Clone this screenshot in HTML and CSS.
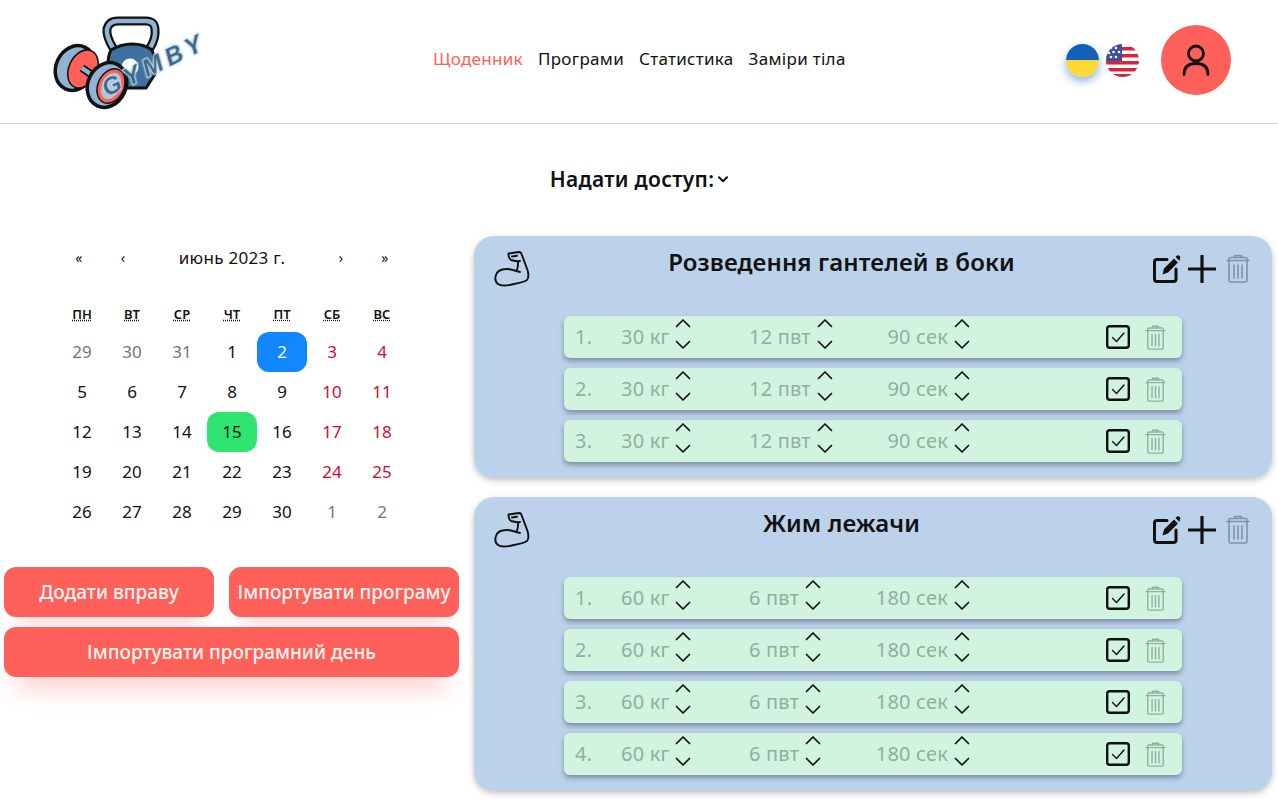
FILE: index.html
```html
<!DOCTYPE html>
<html lang="uk">
<head>
<meta charset="utf-8">
<title>Gymby</title>
<link rel="stylesheet" href="styles.css">
</head>
<body>
<svg class="defs" width="0" height="0" aria-hidden="true">
  <symbol id="i-up" viewBox="0 0 16 10"><path d="M1.5 8.5 8 2l6.5 6.5" fill="none" stroke="currentColor" stroke-width="1.7" stroke-linecap="round" stroke-linejoin="round"/></symbol>
  <symbol id="i-down" viewBox="0 0 16 10"><path d="M1.5 1.5 8 8l6.5-6.5" fill="none" stroke="currentColor" stroke-width="1.7" stroke-linecap="round" stroke-linejoin="round"/></symbol>
  <symbol id="i-check" viewBox="0 0 24 24"><rect x="1.200" y="1.200" width="21.600" height="21.600" rx="2.500" fill="none" stroke="currentColor" stroke-width="2.400"/><path d="M6.500 12.500 10.500 16.500 18 8" fill="none" stroke="currentColor" stroke-width="1.400" stroke-linecap="round" stroke-linejoin="round"/></symbol>
  <symbol id="i-trash" viewBox="0 0 24 29"><g fill="none" stroke="currentColor" stroke-width="1.600" stroke-linejoin="round" stroke-linecap="round"><path d="M1 6.500h22M3 6.500V4.500Q3 3.500 4.500 3.500h15Q21 3.500 21 4.500v2M8.500 3.500V1.500h7v2"/><path d="M3 7v19.500Q3 28 4.500 28h15Q21 28 21 26.500V7"/><path d="M8 11v13M12 11v13M16 11v13"/></g></symbol>
  <symbol id="i-arm" viewBox="0 0 36 36"><g fill="none" stroke="currentColor" stroke-width="1.900" stroke-linejoin="round" stroke-linecap="round"><path d="M14.500 2.500 25 1Q27 1 27.500 3L33.500 19Q35.500 26 33 29Q29 31.500 20 33Q8 36 4 33Q0 30 2 24Q3.500 19.500 8.500 18.500Q13 17.500 17 18.500L22.500 20Q24.500 15 24 10.500L17 9Q14.500 7.500 14.500 2.500Z"/><path d="M18 5.500 23 4.800M24 10.500 26 10M22.500 20 26 21"/></g></symbol>
  <symbol id="i-edit" viewBox="0 0 28 29"><path d="M14 5.500H4Q1.500 5.500 1.500 8v17Q1.500 27.500 4 27.500h16.500Q23 27.500 23 25V15" fill="none" stroke="currentColor" stroke-width="3" stroke-linecap="round" stroke-linejoin="round"/><path d="M9.500 20.500 11 14.500 21 4.500 25 8.500 15 18.500zM22.500 3l1.500-1.500Q25 .8 26 1.500l1 1Q27.800 3.500 27 4.500L26.500 7z" fill="currentColor"/></symbol>
  <symbol id="i-plus" viewBox="0 0 28 28"><path d="M14 1v26M1 14h26" fill="none" stroke="currentColor" stroke-width="3.200" stroke-linecap="round"/></symbol>
</svg>

<header class="header">
  <div class="logo">
    <svg class="logo-svg" viewBox="50 10 155 100" width="155" height="100" role="img" aria-label="Gymby">
      <path d="M113 48Q106 36 107 29Q109 21 118 21H146Q155 21 155 30Q156 38 150 48" fill="none" stroke="#111" stroke-width="9"/>
      <path d="M113 48Q106 36 107 29Q109 21 118 21H146Q155 21 155 30Q156 38 150 48" fill="none" stroke="#8fb3d1" stroke-width="4.500"/>
      <path d="M111 50Q121 44 132 44Q144 44 152 50Q157 62 155 74L146 88H120Q108 78 108 64Q108 56 111 50Z" fill="#3f709f" stroke="#111" stroke-width="3"/>
      <circle cx="130" cy="67" r="8.500" fill="#fff"/>
      <ellipse cx="75" cy="68" rx="19" ry="23" fill="#8fb3d1" stroke="#111" stroke-width="3.500" transform="rotate(25 75 68)"/>
      <ellipse cx="83" cy="69" rx="14" ry="20" fill="#ff6059" stroke="#111" stroke-width="1.500" transform="rotate(25 83 69)"/>
      <path d="M82 68 95 77" stroke="#111" stroke-width="8"/>
      <path d="M82 68 95 77" stroke="#8fb3d1" stroke-width="4.500"/>
      <ellipse cx="107" cy="85" rx="19" ry="23" fill="#8fb3d1" stroke="#111" stroke-width="3.500" transform="rotate(25 107 85)"/>
      <ellipse cx="111" cy="86" rx="13" ry="18" fill="#ff6059" stroke="#111" stroke-width="1.500" transform="rotate(25 111 86)"/>
      <ellipse cx="111" cy="86" rx="9" ry="14" fill="#a9c6de" transform="rotate(25 111 86)"/>
      <text class="logo-text" x="107" y="97" transform="rotate(-26 107 97)">GYMBY</text>
    </svg>
  </div>
  <nav class="nav">
    <a class="nav-link active" href="#">Щоденник</a>
    <a class="nav-link" href="#">Програми</a>
    <a class="nav-link" href="#">Статистика</a>
    <a class="nav-link" href="#">Заміри тіла</a>
  </nav>
  <div class="header-right">
    <div class="flags">
      <span class="flag flag-ua"></span>
      <svg class="flag" viewBox="0 0 33 33" role="img" aria-label="English">
        <rect width="33" height="33" fill="#fff"/>
        <path d="M0 3h33v3.500H0zM0 10h33v3.500H0zM0 17h33v3.500H0zM0 24h33v3.500H0zM0 30h33v3H0z" fill="#d8253d"/>
        <rect width="16" height="17" fill="#3b4f9c"/>
        <g fill="#fff"><circle cx="5" cy="4" r="1.300"/><circle cx="10" cy="4" r="1.300"/><circle cx="13" cy="8" r="1.300"/><circle cx="7.500" cy="8" r="1.300"/><circle cx="3" cy="9" r="1.300"/><circle cx="5" cy="13" r="1.300"/><circle cx="10" cy="13" r="1.300"/></g>
      </svg>
    </div>
    <button class="avatar" aria-label="Профіль">
      <svg viewBox="0 0 28 32" width="28" height="32"><circle cx="14" cy="9.500" r="7.500" fill="none" stroke="#111" stroke-width="2.800"/><path d="M2 30.500Q2 19.500 14 19.500T26 30.500" fill="none" stroke="#111" stroke-width="2.800" stroke-linecap="round"/></svg>
    </button>
  </div>
</header>

<div class="access">
  <button class="access-btn">Надати доступ:<svg viewBox="0 0 10 7" width="10" height="7"><path d="M1 1.200 5 5.200 9 1.200" fill="none" stroke="#111" stroke-width="2" stroke-linecap="round" stroke-linejoin="round"/></svg></button>
</div>

<main class="main">
  <aside class="side">
    <div class="calendar">
      <div class="cal-nav">
        <span class="cal-arrow">«</span><span class="cal-arrow">‹</span>
        <span class="cal-label">июнь 2023 г.</span>
        <span class="cal-arrow">›</span><span class="cal-arrow">»</span>
      </div>
      <div class="cal-week">
        <abbr>пн</abbr><abbr>вт</abbr><abbr>ср</abbr><abbr>чт</abbr><abbr>пт</abbr><abbr>сб</abbr><abbr>вс</abbr>
      </div>
      <div class="cal-days">
        <span class="muted">29</span><span class="muted">30</span><span class="muted">31</span><span>1</span><span class="picked">2</span><span class="red">3</span><span class="red">4</span>
        <span>5</span><span>6</span><span>7</span><span>8</span><span>9</span><span class="red">10</span><span class="red">11</span>
        <span>12</span><span>13</span><span>14</span><span class="today">15</span><span>16</span><span class="red">17</span><span class="red">18</span>
        <span>19</span><span>20</span><span>21</span><span>22</span><span>23</span><span class="red">24</span><span class="red">25</span>
        <span>26</span><span>27</span><span>28</span><span>29</span><span>30</span><span class="muted">1</span><span class="muted">2</span>
      </div>
    </div>
    <div class="actions">
      <button class="btn btn-add">Додати вправу</button>
      <button class="btn btn-import">Імпортувати програму</button>
      <button class="btn btn-wide">Імпортувати програмний день</button>
    </div>
  </aside>

  <section class="cards">
    <article class="card">
      <div class="card-head">
        <svg class="arm"><use href="#i-arm"/></svg>
        <h2 class="card-title">Розведення гантелей в боки</h2>
        <div class="card-tools">
          <svg class="tool-edit"><use href="#i-edit"/></svg>
          <svg class="tool-plus"><use href="#i-plus"/></svg>
          <svg class="tool-trash"><use href="#i-trash"/></svg>
        </div>
      </div>
      <div class="rows">
        <div class="row"><span class="num">1.</span>
          <div class="cell c1"><span class="val">30 кг</span><span class="spin"><svg><use href="#i-up"/></svg><svg><use href="#i-down"/></svg></span></div>
          <div class="cell c2"><span class="val">12 пвт</span><span class="spin"><svg><use href="#i-up"/></svg><svg><use href="#i-down"/></svg></span></div>
          <div class="cell c3"><span class="val">90 сек</span><span class="spin"><svg><use href="#i-up"/></svg><svg><use href="#i-down"/></svg></span></div>
          <svg class="check"><use href="#i-check"/></svg><svg class="row-trash"><use href="#i-trash"/></svg>
        </div>
        <div class="row"><span class="num">2.</span>
          <div class="cell c1"><span class="val">30 кг</span><span class="spin"><svg><use href="#i-up"/></svg><svg><use href="#i-down"/></svg></span></div>
          <div class="cell c2"><span class="val">12 пвт</span><span class="spin"><svg><use href="#i-up"/></svg><svg><use href="#i-down"/></svg></span></div>
          <div class="cell c3"><span class="val">90 сек</span><span class="spin"><svg><use href="#i-up"/></svg><svg><use href="#i-down"/></svg></span></div>
          <svg class="check"><use href="#i-check"/></svg><svg class="row-trash"><use href="#i-trash"/></svg>
        </div>
        <div class="row"><span class="num">3.</span>
          <div class="cell c1"><span class="val">30 кг</span><span class="spin"><svg><use href="#i-up"/></svg><svg><use href="#i-down"/></svg></span></div>
          <div class="cell c2"><span class="val">12 пвт</span><span class="spin"><svg><use href="#i-up"/></svg><svg><use href="#i-down"/></svg></span></div>
          <div class="cell c3"><span class="val">90 сек</span><span class="spin"><svg><use href="#i-up"/></svg><svg><use href="#i-down"/></svg></span></div>
          <svg class="check"><use href="#i-check"/></svg><svg class="row-trash"><use href="#i-trash"/></svg>
        </div>
      </div>
    </article>

    <article class="card">
      <div class="card-head">
        <svg class="arm"><use href="#i-arm"/></svg>
        <h2 class="card-title">Жим лежачи</h2>
        <div class="card-tools">
          <svg class="tool-edit"><use href="#i-edit"/></svg>
          <svg class="tool-plus"><use href="#i-plus"/></svg>
          <svg class="tool-trash"><use href="#i-trash"/></svg>
        </div>
      </div>
      <div class="rows">
        <div class="row"><span class="num">1.</span>
          <div class="cell c1"><span class="val">60 кг</span><span class="spin"><svg><use href="#i-up"/></svg><svg><use href="#i-down"/></svg></span></div>
          <div class="cell c2"><span class="val">6 пвт</span><span class="spin"><svg><use href="#i-up"/></svg><svg><use href="#i-down"/></svg></span></div>
          <div class="cell c3"><span class="val">180 сек</span><span class="spin"><svg><use href="#i-up"/></svg><svg><use href="#i-down"/></svg></span></div>
          <svg class="check"><use href="#i-check"/></svg><svg class="row-trash"><use href="#i-trash"/></svg>
        </div>
        <div class="row"><span class="num">2.</span>
          <div class="cell c1"><span class="val">60 кг</span><span class="spin"><svg><use href="#i-up"/></svg><svg><use href="#i-down"/></svg></span></div>
          <div class="cell c2"><span class="val">6 пвт</span><span class="spin"><svg><use href="#i-up"/></svg><svg><use href="#i-down"/></svg></span></div>
          <div class="cell c3"><span class="val">180 сек</span><span class="spin"><svg><use href="#i-up"/></svg><svg><use href="#i-down"/></svg></span></div>
          <svg class="check"><use href="#i-check"/></svg><svg class="row-trash"><use href="#i-trash"/></svg>
        </div>
        <div class="row"><span class="num">3.</span>
          <div class="cell c1"><span class="val">60 кг</span><span class="spin"><svg><use href="#i-up"/></svg><svg><use href="#i-down"/></svg></span></div>
          <div class="cell c2"><span class="val">6 пвт</span><span class="spin"><svg><use href="#i-up"/></svg><svg><use href="#i-down"/></svg></span></div>
          <div class="cell c3"><span class="val">180 сек</span><span class="spin"><svg><use href="#i-up"/></svg><svg><use href="#i-down"/></svg></span></div>
          <svg class="check"><use href="#i-check"/></svg><svg class="row-trash"><use href="#i-trash"/></svg>
        </div>
        <div class="row"><span class="num">4.</span>
          <div class="cell c1"><span class="val">60 кг</span><span class="spin"><svg><use href="#i-up"/></svg><svg><use href="#i-down"/></svg></span></div>
          <div class="cell c2"><span class="val">6 пвт</span><span class="spin"><svg><use href="#i-up"/></svg><svg><use href="#i-down"/></svg></span></div>
          <div class="cell c3"><span class="val">180 сек</span><span class="spin"><svg><use href="#i-up"/></svg><svg><use href="#i-down"/></svg></span></div>
          <svg class="check"><use href="#i-check"/></svg><svg class="row-trash"><use href="#i-trash"/></svg>
        </div>
      </div>
    </article>
  </section>
</main>
</body>
</html>
```
FILE: styles.css
```css
* { box-sizing: border-box; }
html, body { margin: 0; padding: 0; }
body {
  font-family: "Noto Sans", "Open Sans", sans-serif;
  color: #111;
  background: #fff;
  height: 801px;
  overflow: hidden;
}
.defs { position: absolute; }
button { font-family: inherit; border: 0; cursor: pointer; }

/* header */
.header {
  display: flex;
  align-items: flex-start;
  height: 124px;
  padding-left: 50px;
  border-bottom: 1px solid #d5d5d5;
}
.logo { width: 155px; height: 100px; margin-top: 10px; flex: none; }
.logo-svg { display: block; overflow: visible; }
.logo-text {
  font-family: "Liberation Sans", sans-serif;
  font-size: 24px;
  font-weight: 700;
  font-style: italic;
  letter-spacing: 5px;
  fill: #3f6685;
  stroke: #d3e5f3;
  stroke-width: 1.6px;
  paint-order: stroke;
  filter: drop-shadow(0 0 1px #a9cbe6);
}
.nav { display: flex; gap: 15px; margin-left: 228px; margin-top: 47px; }
.nav-link { color: #111; text-decoration: none; font-size: 17px; letter-spacing: .3px; line-height: 24px; white-space: nowrap; }
.nav-link.active { color: #ff6059; }
.header-right { margin-left: auto; display: flex; align-items: flex-start; padding-right: 47px; }
.flags { display: flex; gap: 7px; margin-top: 44px; }
.flag { display: block; width: 33px; height: 33px; border-radius: 50%; overflow: hidden; flex: none; }
.flag-ua {
  background: linear-gradient(#1260b8 50%, #fdd835 50%);
  box-shadow: 0 4px 8px rgba(30, 110, 210, .55);
}
.avatar {
  width: 70px;
  height: 70px;
  margin: 25px 0 0 22px;
  border-radius: 50%;
  background: #ff6059;
  display: flex;
  align-items: center;
  justify-content: center;
  padding: 0;
}

/* access */
.access { height: 112px; padding-top: 41px; display: flex; justify-content: center; }
.access-btn {
  display: flex;
  align-items: center;
  gap: 4px;
  height: 28px;
  background: none;
  padding: 0;
  color: #111;
  font-size: 21px;
  font-weight: 600;
  letter-spacing: .3px;
}

/* layout */
.main { display: flex; align-items: flex-start; }
.side { width: 474px; flex: none; padding-top: 2px; }
.cards { width: 798px; display: flex; flex-direction: column; gap: 20px; }

/* calendar */
.calendar { width: 350px; margin-left: 57px; }
.cal-nav { display: flex; align-items: center; height: 40px; padding-bottom: 2px; font-size: 17px; letter-spacing: .3px; }
.cal-arrow { width: 44px; text-align: center; font-size: 14px; }
.cal-label { flex: 1; text-align: center; }
.cal-week {
  display: grid;
  grid-template-columns: repeat(7, 50px);
  margin-top: 22px;
  height: 32px;
  padding-bottom: 4px;
  align-items: center;
  text-align: center;
  font-size: 13px;
  font-weight: 600;
  text-transform: uppercase;
}
.cal-week abbr { text-decoration: underline dotted; }
.cal-days { display: grid; grid-template-columns: repeat(7, 50px); grid-auto-rows: 40px; font-size: 17px; }
.cal-days span { display: flex; align-items: center; justify-content: center; padding-bottom: 2px; border-radius: 12px; }
.cal-days .muted { color: #757575; }
.cal-days .red { color: #c8102e; }
.cal-days .picked { background: #1087ff; color: #fff; }
.cal-days .today { background: #2ee56f; }

/* buttons */
.actions {
  display: grid;
  grid-template-columns: 210px 230px;
  column-gap: 15px;
  row-gap: 10px;
  margin: 35px 0 0 4px;
  width: 455px;
}
.btn {
  height: 50px;
  border-radius: 12px;
  background: #ff6059;
  color: #fff6f2;
  font-size: 19px;
  font-weight: 500;
  padding: 0;
  white-space: nowrap;
  box-shadow: 0 20px 20px -14px rgba(255, 96, 89, .3);
}
.btn-wide { grid-column: 1 / 3; box-shadow: 0 24px 24px -14px rgba(255, 96, 89, .35); }

/* cards */
.card {
  background: #bbd2ea;
  border-radius: 20px;
  padding-bottom: 15px;
  box-shadow: 0 3px 6px rgba(60, 70, 90, .35);
}
.card-head { display: flex; align-items: flex-start; height: 80px; padding: 15px 22px 0 20px; }
.arm { width: 36px; height: 36px; flex: none; color: #111; }
.card-title { flex: 1; margin: -2px 0 0; text-align: center; font-size: 24px; letter-spacing: .1px; line-height: 26px; font-weight: 600; }
.card-tools { display: flex; align-items: flex-start; }
.tool-edit { width: 28px; height: 29px; margin-top: 3px; color: #111; }
.tool-plus { width: 28px; height: 28px; margin: 4px 0 0 7px; color: #111; }
.tool-trash { width: 24px; height: 29px; margin: 3px 0 0 10px; color: #6f8798; opacity: .8; }
.rows { display: flex; flex-direction: column; gap: 10px; margin-left: 90px; width: 618px; }
.row {
  display: flex;
  align-items: center;
  height: 42px;
  padding-left: 11px;
  background: #d1f4e0;
  border-radius: 6px;
  box-shadow: 0 3px 5px rgba(50, 60, 80, .45);
  color: #94ad9f;
  font-size: 20px;
  letter-spacing: .2px;
}
.num { width: 46px; flex: none; padding-bottom: 2px; }
.val { padding-bottom: 2px; white-space: nowrap; }
.cell { display: flex; align-items: center; flex: none; }
.c1 { width: 128px; }
.c2 { width: 124px; }
.c3 { width: 97px; justify-content: flex-end; }
.spin { display: flex; flex-direction: column; gap: 12px; margin-left: 6px; padding-bottom: 6px; color: #111; }
.spin svg { display: block; width: 16px; height: 10px; }
.check { width: 24px; height: 24px; margin-left: auto; color: #111; }
.row-trash { width: 21px; height: 25px; margin: 0 16px 0 15px; color: #94ad9f; }
```
